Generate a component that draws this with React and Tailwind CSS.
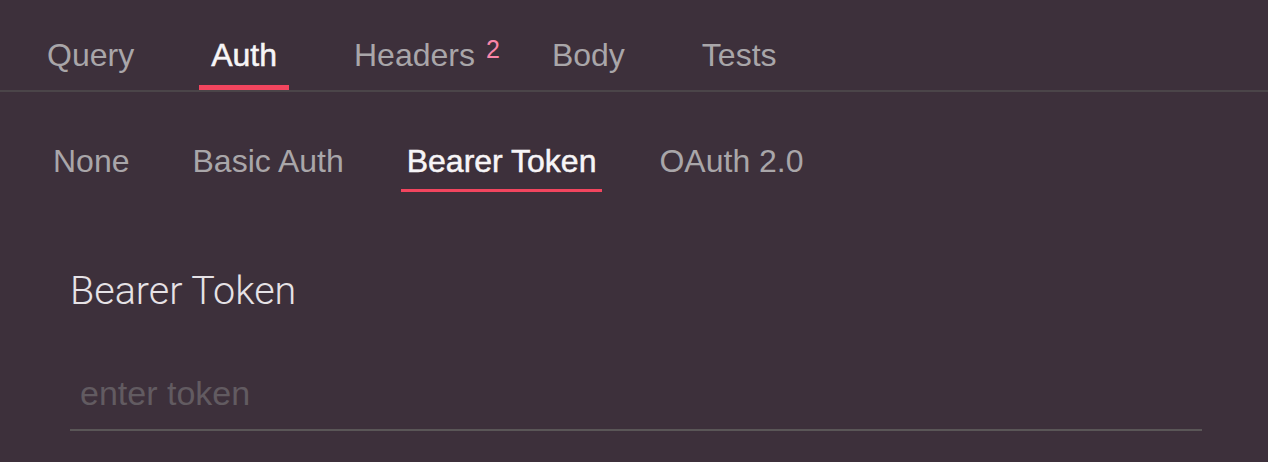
import React, { useState } from "react";

const mainTabs = ["Query", "Auth", "Headers", "Body", "Tests"];
const authTabs = ["None", "Basic Auth", "Bearer Token", "OAuth 2.0"];

const App = () => {
  const [tab, setTab] = useState("Auth");
  const [authType, setAuthType] = useState("Bearer Token");
  const [token, setToken] = useState("");

  return (
    <div
      className="w-[1268px] h-[462px] overflow-hidden bg-[#3d303b]"
      style={{ fontFamily: '"Liberation Sans", Arial, sans-serif' }}
    >
      <div className="flex gap-[53px] pl-[35px] pt-[39px] border-b-2 border-[#4b4549]">
        {mainTabs.map((t) => (
          <button
            key={t}
            onClick={() => setTab(t)}
            className={
              "relative px-3 pb-[14px] text-[32px] leading-none border-b-[5px] " +
              (tab === t
                ? "text-[#f7f5f7] border-[#f2455e] [-webkit-text-stroke:0.5px_#f7f5f7]"
                : "text-[#a9a6a9] border-transparent")
            }
          >
            {t}
            {t === "Headers" && (
              <span className="absolute left-[calc(100%-1px)] -top-[2px] text-[25px] leading-none text-[#fb86a9]">
                2
              </span>
            )}
          </button>
        ))}
      </div>

      <div className="flex gap-[51px] pl-[47px] pt-[53px]">
        {authTabs.map((t) => (
          <button
            key={t}
            onClick={() => setAuthType(t)}
            className={
              "px-1.5 pb-3 text-[32px] leading-none border-b-[3px] " +
              (authType === t
                ? "text-[#f7f5f7] border-[#f2455e] [-webkit-text-stroke:0.5px_#f7f5f7]"
                : "text-[#a9a6a9] border-transparent")
            }
          >
            {t}
          </button>
        ))}
      </div>

      <div className="pl-[70px] pr-[66px] pt-[79px]">
        <h2
          className="text-[39.5px] leading-none font-light text-[#e6e2e6]"
          style={{ fontFamily: "Roboto, sans-serif" }}
        >
          Bearer Token
        </h2>
        <input
          type="text"
          value={token}
          onChange={(e) => setToken(e.target.value)}
          placeholder="enter token"
          className="mt-[60px] block w-full h-[60px] pl-[10px] pb-[12px] bg-transparent text-[34px] text-[#d8d4d8] placeholder:text-[#625b61] border-b-2 border-[#5a5657] outline-none"
        />
      </div>
    </div>
  );
};

export default App;
